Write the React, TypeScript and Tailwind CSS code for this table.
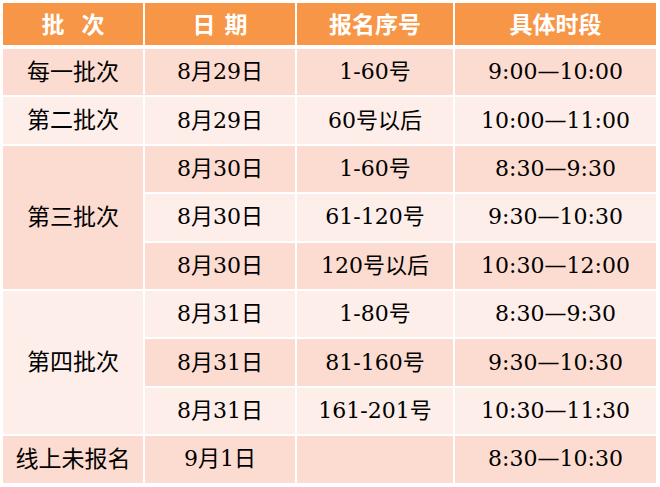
import React from "react";

const DARK = "bg-[#fcdcd0]";
const LIGHT = "bg-[#fdeee9]";

type Row = { date: string; num: string; time: string };

const rows: Row[] = [
  { date: "8月29日", num: "1-60号", time: "9:00—10:00" },
  { date: "8月29日", num: "60号以后", time: "10:00—11:00" },
  { date: "8月30日", num: "1-60号", time: "8:30—9:30" },
  { date: "8月30日", num: "61-120号", time: "9:30—10:30" },
  { date: "8月30日", num: "120号以后", time: "10:30—12:00" },
  { date: "8月31日", num: "1-80号", time: "8:30—9:30" },
  { date: "8月31日", num: "81-160号", time: "9:30—10:30" },
  { date: "8月31日", num: "161-201号", time: "10:30—11:30" },
  { date: "9月1日", num: "", time: "8:30—10:30" },
];

const batches: { label: string; start: number; span: number }[] = [
  { label: "每一批次", start: 0, span: 1 },
  { label: "第二批次", start: 1, span: 1 },
  { label: "第三批次", start: 2, span: 3 },
  { label: "第四批次", start: 5, span: 3 },
  { label: "线上未报名", start: 8, span: 1 },
];

const rowStart = [
  "row-start-2",
  "row-start-3",
  "row-start-4",
  "row-start-5",
  "row-start-6",
  "row-start-7",
  "row-start-8",
  "row-start-9",
  "row-start-10",
];
const rowSpan: Record<number, string> = { 1: "row-span-1", 3: "row-span-3" };

const cell = "flex items-center justify-center text-[22px] text-black leading-none";

export default function App() {
  return (
    <div
      className="w-[660px] h-[487px] bg-white overflow-hidden pt-[3px] pl-[3px]"
      style={{ fontFamily: '"DejaVu Serif", "Noto Sans CJK SC", serif' }}
    >
      <div className="grid grid-cols-[140px_150px_156px_201px] grid-rows-[44px_repeat(9,46.4px)] gap-[2px]">
        <div className={`col-start-1 row-start-1 h-[42px] bg-[#f79646] ${cell} text-white font-bold text-[23px]`}>
          <span>批</span>
          <span className="ml-[17px]">次</span>
        </div>
        <div className={`col-start-2 row-start-1 h-[42px] bg-[#f79646] ${cell} text-white font-bold text-[23px]`}>
          <span>日</span>
          <span className="ml-[9px]">期</span>
        </div>
        <div className={`col-start-3 row-start-1 h-[42px] bg-[#f79646] ${cell} text-white font-bold text-[23px]`}>
          报名序号
        </div>
        <div className={`col-start-4 row-start-1 h-[42px] bg-[#f79646] ${cell} text-white font-bold text-[23px]`}>
          具体时段
        </div>

        {batches.map((b) => (
          <div
            key={b.label}
            className={`col-start-1 ${rowStart[b.start]} ${rowSpan[b.span]} ${
              b.start % 2 === 0 ? DARK : LIGHT
            } ${cell} text-[23px]`}
          >
            {b.label}
          </div>
        ))}

        {rows.map((r, i) => {
          const bg = i % 2 === 0 ? DARK : LIGHT;
          return (
            <React.Fragment key={i}>
              <div className={`col-start-2 ${rowStart[i]} ${bg} ${cell}`}>{r.date}</div>
              <div className={`col-start-3 ${rowStart[i]} ${bg} ${cell}`}>{r.num}</div>
              <div className={`col-start-4 ${rowStart[i]} ${bg} ${cell}`}>{r.time}</div>
            </React.Fragment>
          );
        })}
      </div>
    </div>
  );
}
